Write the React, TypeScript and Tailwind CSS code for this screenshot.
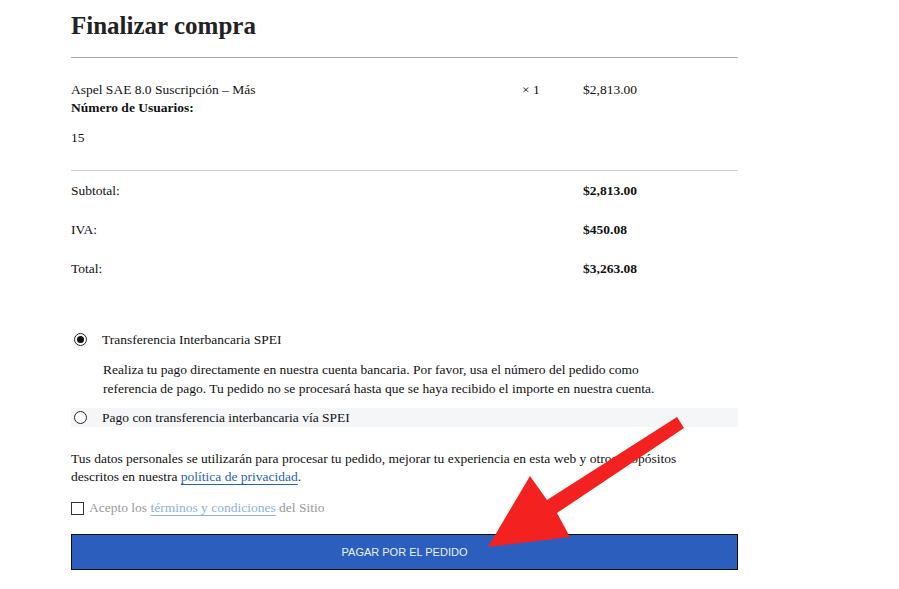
export default function App() {
  const serif = { fontFamily: '"Liberation Serif", "DejaVu Serif", serif' };
  return (
    <div className="relative min-h-[589px] w-[899px] bg-white text-[#111]" style={serif}>
      <div className="ml-[71px] w-[667px] pt-[9px]">
        <h1 className="text-[25px] font-bold leading-[34px] text-[#222]">Finalizar compra</h1>
        <div className="mt-[14px] border-t border-[#a9a9a9]" />

        {/* producto */}
        <div className="grid grid-cols-[451px_61px_1fr] pt-[23px] pb-[23px] text-[13.5px] leading-[18px]">
          <div>
            <div>Aspel SAE 8.0 Suscripción – Más</div>
            <div className="font-bold">Número de Usuarios:</div>
            <div className="mt-[12px]">15</div>
          </div>
          <div>× 1</div>
          <div>$2,813.00</div>
        </div>
        <div className="border-t border-[#cfcfcf]" />

        <div className="grid grid-cols-[512px_1fr] gap-y-[21px] pt-[11px] text-[13.5px] leading-[18px]">
          <div>Subtotal:</div>
          <div className="font-bold">$2,813.00</div>
          <div>IVA:</div>
          <div className="font-bold">$450.08</div>
          <div>Total:</div>
          <div className="font-bold">$3,263.08</div>
        </div>

        {/* pagos */}
        <div className="mt-[52px] text-[13.5px] leading-[19px]">
          <div className="flex items-center gap-[15px] pl-[3px]">
            <span className="flex h-[13px] w-[13px] items-center justify-center rounded-full border border-[#222]">
              <span className="h-[7px] w-[7px] rounded-full bg-[#111]" />
            </span>
            <span>Transferencia Interbancaria SPEI</span>
          </div>
          <p className="mt-[11px] w-[620px] pl-[32px]">
            Realiza tu pago directamente en nuestra cuenta bancaria. Por favor, usa el número del pedido como
            referencia de pago. Tu pedido no se procesará hasta que se haya recibido el importe en nuestra cuenta.
          </p>
          <div className="mt-[10px] flex h-[19px] items-center gap-[15px] bg-[#f5f6f8] pl-[3px]">
            <span className="h-[13px] w-[13px] rounded-full border border-[#222] bg-white" />
            <span>Pago con transferencia interbancaria vía SPEI</span>
          </div>
        </div>

        <p className="mt-[23px] text-[13.5px] leading-[18px]">
          Tus datos personales se utilizarán para procesar tu pedido, mejorar tu experiencia en esta web y otros propósitos
          <br />
          descritos en nuestra <a className="text-[#2c5fbd] underline underline-offset-[3px]">política de privacidad</a>.
        </p>

        <div className="mt-[13px] flex items-center gap-[5px] text-[13.5px] leading-[18px] text-[#999]">
          <span className="h-[13px] w-[13px] border border-[#333]" />
          <span>
            Acepto los <a className="text-[#8fb0e0] underline underline-offset-[3px]">términos y condiciones</a> del Sitio
          </span>
        </div>

        <button
          className="mt-[17px] flex h-[36px] w-full items-center justify-center border border-[#111] bg-[#2c5fbd] text-[11px] text-[#e9eefa]"
          style={{ fontFamily: '"Liberation Sans", Arial, sans-serif' }}
        >
          PAGAR POR EL PEDIDO
        </button>
      </div>

      {/* flecha */}
      <svg className="pointer-events-none absolute left-0 top-0" width="899" height="589" viewBox="0 0 899 589">
        <polygon
          points="677,417 684,428 557,513 570,537 488,547 530,476 547,500"
          fill="#f42121"
        />
      </svg>
    </div>
  );
}
